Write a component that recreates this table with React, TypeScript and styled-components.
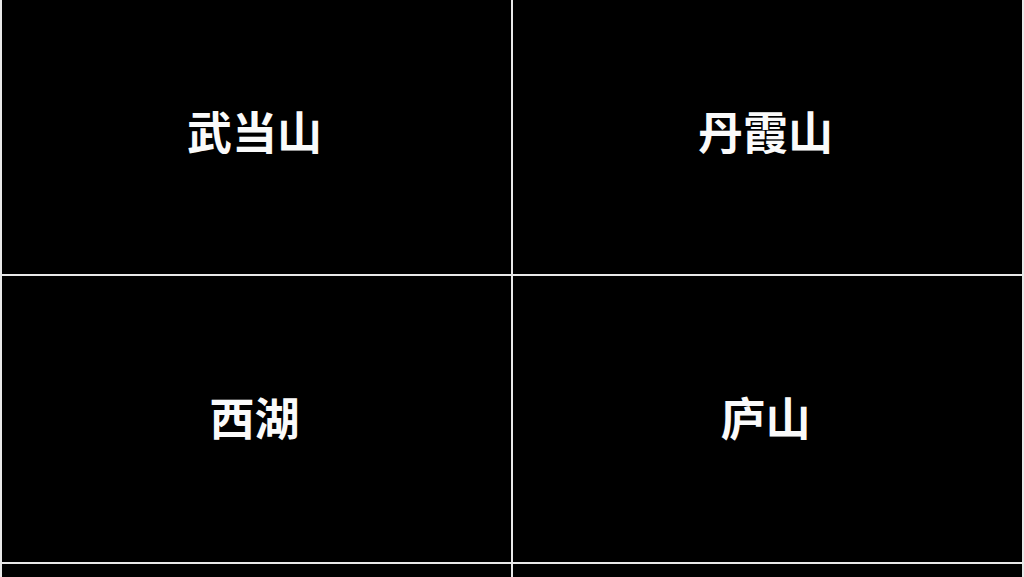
import React from "react";
import styled, { createGlobalStyle } from "styled-components";

const Global = createGlobalStyle`
  html, body { margin: 0; padding: 0; background: #000; overflow: hidden; }
  body { width: 1024px; height: 577px; }
`;

const Grid = styled.div`
  display: grid;
  grid-template-columns: 509px 509px;
  grid-template-rows: 274px 286px 286px;
  gap: 2px;
  padding: 0 2px;
  width: 1024px;
  height: 577px;
  box-sizing: border-box;
  background: #e8e8e8;
  overflow: hidden;
`;

const Cell = styled.div<{ $lift: number }>`
  background: #000;
  display: flex;
  align-items: center;
  justify-content: center;
  box-sizing: border-box;
  padding-bottom: ${(p) => p.$lift * 2}px;
  padding-right: 4px;
  color: #fafafa;
  font-family: "Noto Sans CJK SC", "Noto Sans", sans-serif;
  font-weight: 700;
  font-size: 45px;
  line-height: 1;
`;

const items = [
  { t: "武当山", lift: 7 },
  { t: "丹霞山", lift: 7 },
  { t: "西湖", lift: 3 },
  { t: "庐山", lift: 3 },
  { t: "", lift: 0 },
  { t: "", lift: 0 },
];

export default function App() {
  return (
    <>
      <Global />
      <Grid>
        {items.map((it, i) => (
          <Cell key={i} $lift={it.lift}>
            {it.t}
          </Cell>
        ))}
      </Grid>
    </>
  );
}
